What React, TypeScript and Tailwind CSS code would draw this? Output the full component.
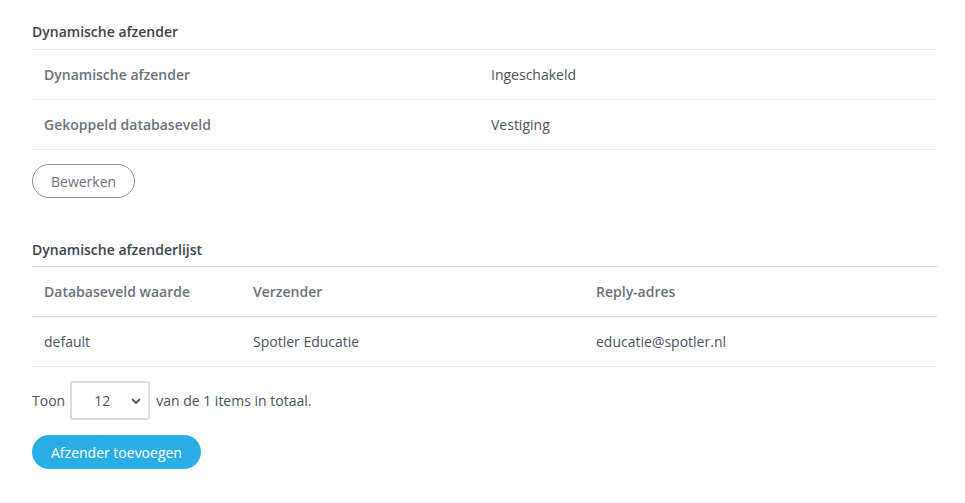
import React from "react";

export default function App() {
  const font = { fontFamily: '"Open Sans", "Liberation Sans", sans-serif' };
  return (
    <div className="min-h-screen bg-white pl-8 pr-[28px] text-[14px] text-[#4b5260]" style={font}>
      {/* Section 1 */}
      <div className="pt-[22px]">
        <div className="h-5 leading-5 font-semibold text-[#3d4450] pb-0">Dynamische afzender</div>
        <div className="mt-[7px] border-b border-[#ebebeb]" />
        <div className="flex h-[50px] items-center border-b border-[#ebebeb]">
          <div className="w-[447px] pl-3 font-semibold text-[#6b727d]">Dynamische afzender</div>
          <div className="pl-3">Ingeschakeld</div>
        </div>
        <div className="flex h-[50px] items-center border-b border-[#ebebeb]">
          <div className="w-[447px] pl-3 font-semibold text-[#6b727d]">Gekoppeld databaseveld</div>
          <div className="pl-3">Vestiging</div>
        </div>
        <button className="mt-[14px] h-[34px] rounded-full border border-[#8a8f96] px-[18px] text-[#6b727d]">
          Bewerken
        </button>
      </div>

      {/* Section 2 */}
      <div className="mt-[42px]">
        <div className="h-5 leading-5 font-semibold text-[#3d4450]">Dynamische afzenderlijst</div>
        <div className="mt-[6px] border-b border-[#d6d6d6]" />
        <div className="flex h-[50px] items-center border-b border-[#dcdcdc] font-semibold text-[#6b727d]">
          <div className="w-[209px] pl-3">Databaseveld waarde</div>
          <div className="w-[343px] pl-3">Verzender</div>
          <div className="pl-3">Reply-adres</div>
        </div>
        <div className="flex h-[50px] items-center border-b border-[#ebebeb]">
          <div className="w-[209px] pl-3">default</div>
          <div className="w-[343px] pl-3">Spotler Educatie</div>
          <div className="pl-3">educatie@spotler.nl</div>
        </div>
        <div className="mt-[14px] flex items-center">
          <span>Toon</span>
          <div className="ml-[5px] flex h-[39px] w-[80px] items-center rounded-[3px] border-2 border-[#dcdcdc] pl-[22px] pr-[6px]">
            <span className="flex-1">12</span>
            <svg width="12" height="12" viewBox="0 0 12 12" fill="none">
              <path d="M2.5 4.5 L6 8 L9.5 4.5" stroke="#555b66" strokeWidth="1.8" strokeLinecap="round" strokeLinejoin="round" />
            </svg>
          </div>
          <span className="ml-[6px]">van de 1 items in totaal.</span>
        </div>
        <button className="mt-[15px] h-[34px] rounded-full bg-[#29aee6] px-[19px] text-white">
          Afzender toevoegen
        </button>
      </div>
    </div>
  );
}
